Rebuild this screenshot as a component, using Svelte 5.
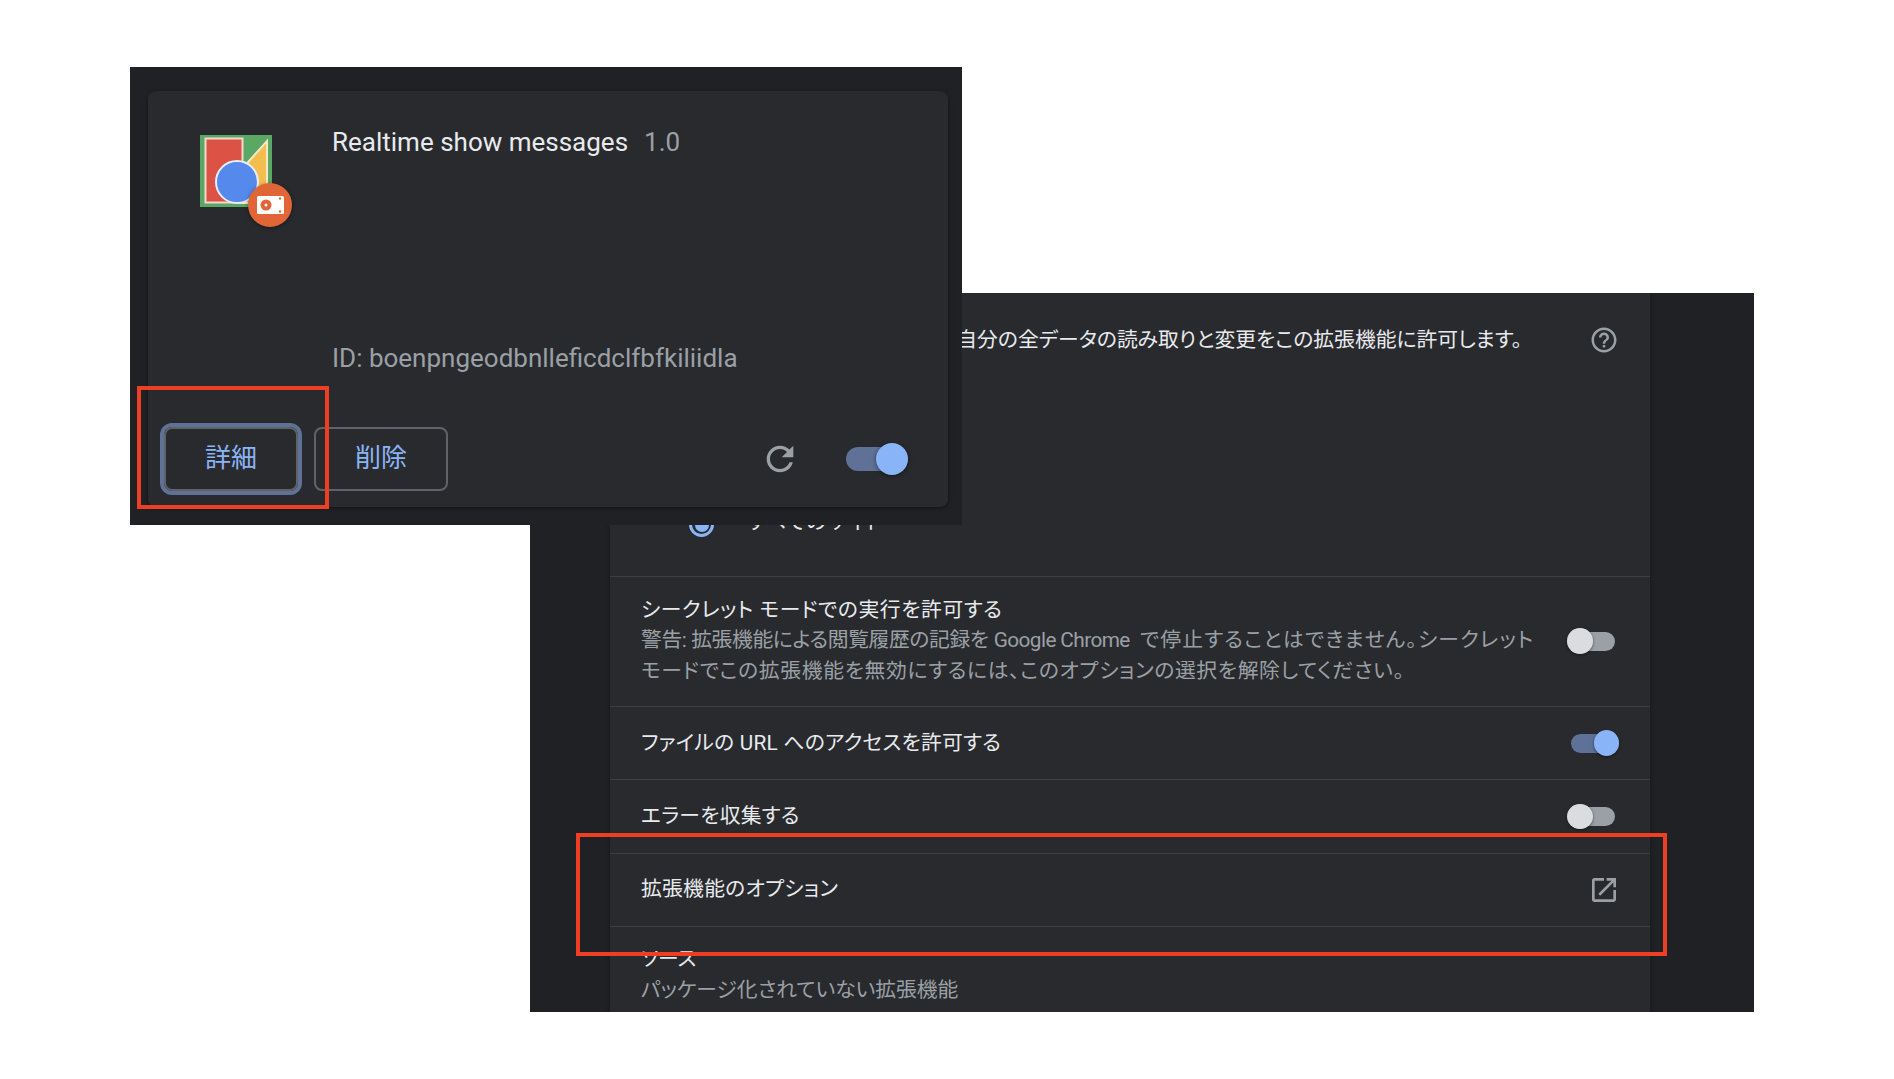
<script>
  const rows = [
    { label: 'ファイルの URL へのアクセスを許可する', on: true },
    { label: 'エラーを収集する', on: false }
  ];
</script>

<div class="page">
  <section class="window details">
    <div class="panel">
      <div class="row access">
        <span class="access-text">ウェブサイト上の自分の全データの読み取りと変更をこの拡張機能に許可します。</span>
        <svg class="help" viewBox="0 0 24 24"><path d="M11 18h2v-2h-2v2zm1-16C6.48 2 2 6.48 2 12s4.48 10 10 10 10-4.48 10-10S17.52 2 12 2zm0 18c-4.41 0-8-3.59-8-8s3.59-8 8-8 8 3.59 8 8-3.59 8-8 8zm0-14c-2.21 0-4 1.79-4 4h2c0-1.1.9-2 2-2s2 .9 2 2c0 2-3 1.75-3 5h2c0-2.25 3-2.5 3-5 0-2.21-1.79-4-4-4z"/></svg>
      </div>
      <div class="sites">
        <span class="radio"><span class="dot"></span></span>
        <span class="site-label">すべてのサイト</span>
      </div>
      <div class="row incognito">
        <div class="texts">
          <div class="title incognito-title">シークレット モードでの実行を許可する</div>
          <div class="sub"><span class="tight">警告: 拡張機能による閲覧履歴の記録を</span> <span class="brand">Google Chrome</span> <span class="loose">で停止することはできません。シークレット</span><br /><span class="line-two">モードでこの拡張機能を無効にするには、このオプションの選択を解除してください。</span></div>
        </div>
        <span class="small-toggle"><span class="small-knob"></span></span>
      </div>
      {#each rows as item}
        <div class="row simple">
          <span class="title spaced">{item.label}</span>
          <span class="small-toggle" class:on={item.on}><span class="small-knob"></span></span>
        </div>
      {/each}
      <div class="row simple">
        <span class="title spaced">拡張機能のオプション</span>
        <svg class="open" viewBox="0 0 24 24"><path d="M19 19H5V5h7V3H5a2 2 0 0 0-2 2v14a2 2 0 0 0 2 2h14c1.1 0 2-.9 2-2v-7h-2v7zM14 3v2h3.59l-9.83 9.83 1.41 1.41L19 6.41V10h2V3h-7z"/></svg>
      </div>
      <div class="row source">
        <div class="title">ソース</div>
        <div class="sub">パッケージ化されていない拡張機能</div>
      </div>
    </div>
  </section>

  <section class="window card-window">
    <div class="card">
      <div class="card-top">
        <div class="icon-wrap">
          <svg class="ext-icon" viewBox="0 0 72 72">
            <rect width="72" height="72" fill="#5aa864" />
            <rect x="5.5" y="3.5" width="37" height="64" fill="#dc5346" stroke="#efd9d0" stroke-width="2" />
            <path d="M67 6 L67 68 L40 68 L40 36 Z" fill="#f4bd50" stroke="#f3e9c8" stroke-width="2" />
            <circle cx="37" cy="47" r="21" fill="#5589ec" stroke="#e6edf8" stroke-width="2" />
          </svg>
          <svg class="badge" viewBox="0 0 44 44">
            <circle cx="22" cy="22" r="22" fill="#e06537" />
            <rect x="9" y="13" width="27" height="18" rx="1.5" fill="#fff" />
            <circle cx="18" cy="22" r="5.5" fill="#e06537" />
            <circle cx="18" cy="22" r="1.5" fill="#fff" />
            <circle cx="32" cy="15.5" r="1.2" fill="#e06537" />
            <circle cx="32" cy="28.5" r="1.2" fill="#e06537" />
          </svg>
        </div>
        <div class="info">
          <div class="name">Realtime show messages<span class="version">1.0</span></div>
          <div class="ext-id">ID: boenpngeodbnlleficdclfbfkiliidla</div>
        </div>
      </div>
      <div class="actions">
        <button class="btn focused">詳細</button>
        <button class="btn">削除</button>
        <span class="spacer"></span>
        <svg class="reload" viewBox="0 0 24 24"><path d="M17.65 6.35C16.2 4.9 14.21 4 12 4c-4.42 0-7.99 3.58-7.99 8s3.57 8 7.99 8c3.73 0 6.84-2.55 7.73-6h-2.08c-.82 2.33-3.04 4-5.65 4-3.31 0-6-2.69-6-6s2.69-6 6-6c1.66 0 3.14.69 4.22 1.78L13 11h7V4l-2.35 2.35z"/></svg>
        <span class="big-toggle"><span class="big-knob"></span></span>
      </div>
    </div>
  </section>

  <div class="mark mark-details"></div>
  <div class="mark mark-options"></div>
</div>

<style>
  :global(body) {
    margin: 0;
    background: #fff;
  }
  .page {
    position: relative;
    width: 1894px;
    height: 1079px;
    overflow: hidden;
    font-family: Roboto, "Noto Sans CJK JP", sans-serif;
    color: #e8eaed;
  }
  .window {
    position: absolute;
    box-sizing: border-box;
    background: #202124;
  }

  /* back window */
  .details {
    left: 530px;
    top: 293px;
    width: 1224px;
    height: 719px;
    padding-left: 80px;
    overflow: hidden;
  }
  .panel {
    width: 1040px;
    height: 100%;
    background: #292a2d;
    box-shadow: 0 0 4px rgba(0, 0, 0, 0.35);
    font-feature-settings: "palt";
    font-size: 20.8px;
    line-height: 31px;
  }
  .row {
    box-sizing: border-box;
    display: flex;
    align-items: center;
    justify-content: space-between;
    padding: 0 35px 0 31px;
    border-top: 1.6px solid rgba(255, 255, 255, 0.1);
  }
  .access {
    height: 92px;
    border-top: 0;
    padding-top: 2px;
    padding-right: 31px;
  }
  .access-text {
    margin-left: auto;
    margin-right: 67px;
    white-space: nowrap;
  }
  .help {
    width: 30px;
    height: 30px;
    fill: #9aa0a6;
  }
  .sites {
    height: 191px;
    box-sizing: border-box;
    display: flex;
    align-items: flex-end;
    padding: 0 0 38px 79px;
  }
  .radio {
    box-sizing: border-box;
    width: 25px;
    height: 25px;
    margin-bottom: 1px;
    border: 3px solid #8ab4f8;
    border-radius: 50%;
    display: flex;
    align-items: center;
    justify-content: center;
  }
  .dot {
    width: 14px;
    height: 14px;
    border-radius: 50%;
    background: #8ab4f8;
  }
  .site-label {
    margin-left: 33px;
    line-height: 31px;
    letter-spacing: 0.7px;
    color: #e8eaed;
  }
  .incognito {
    height: 130px;
    align-items: flex-start;
    padding-top: 18px;
  }
  .incognito .small-toggle {
    margin-top: 36.6px;
  }
  .incognito-title {
    line-height: 30px;
    letter-spacing: 0.6px;
  }
  .tight {
    letter-spacing: -0.4px;
  }
  .brand {
    letter-spacing: -0.6px;
  }
  .loose {
    margin-left: 5px;
    letter-spacing: 1.2px;
  }
  .line-two {
    letter-spacing: 0.65px;
  }
  .spaced {
    letter-spacing: 0.25px;
  }
  .simple {
    height: 73.4px;
  }
  .source {
    display: block;
    padding-top: 17px;
  }
  .sub {
    color: #9aa0a6;
    white-space: nowrap;
  }
  .small-toggle {
    position: relative;
    flex: none;
    width: 41.6px;
    height: 19.2px;
    border-radius: 10px;
    background: #9aa0a6;
  }
  .small-knob {
    position: absolute;
    top: -3.2px;
    left: -6.4px;
    width: 25.6px;
    height: 25.6px;
    border-radius: 50%;
    background: #dadce0;
    box-shadow: 0 1px 3px rgba(0, 0, 0, 0.5);
  }
  .small-toggle.on {
    margin-right: 2px;
    background: #5f7196;
  }
  .on .small-knob {
    left: auto;
    right: -6.4px;
    background: #8ab4f8;
  }
  .open {
    width: 32px;
    height: 32px;
    margin-right: -5px;
    fill: #9aa0a6;
  }

  /* front window */
  .card-window {
    left: 130px;
    top: 67px;
    width: 832px;
    height: 458px;
    padding: 24px 14px 18px 18px;
  }
  .card {
    box-sizing: border-box;
    height: 416px;
    display: flex;
    flex-direction: column;
    border-radius: 8px;
    background: #292a2d;
    box-shadow: 0 1px 4px rgba(0, 0, 0, 0.4);
  }
  .card-top {
    flex: 1;
    display: flex;
    padding: 44px 0 0 52px;
  }
  .icon-wrap {
    position: relative;
    flex: none;
    width: 72px;
    height: 72px;
    margin-right: 60px;
  }
  .ext-icon {
    display: block;
    width: 72px;
    height: 72px;
  }
  .badge {
    position: absolute;
    left: 48px;
    top: 48px;
    width: 44px;
    height: 44px;
    filter: drop-shadow(0 1px 2px rgba(0, 0, 0, 0.4));
  }
  .info {
    font-size: 26px;
    line-height: 34px;
  }
  .name {
    margin-top: -10px;
    white-space: nowrap;
  }
  .version {
    margin-left: 16px;
    color: #9aa0a6;
  }
  .ext-id {
    margin-top: 182px;
    color: #9aa0a6;
    white-space: nowrap;
  }
  .actions {
    display: flex;
    align-items: center;
    gap: 16px;
    padding: 0 48px 16px 16px;
  }
  .btn {
    box-sizing: border-box;
    width: 134px;
    height: 64px;
    padding: 0 0 7px;
    border: 2px solid #5f6368;
    border-radius: 8px;
    background: transparent;
    color: #8ab4f8;
    font-family: inherit;
    font-size: 26px;
  }
  .focused {
    box-shadow: 0 0 0 4px #5f7196;
  }
  .spacer {
    flex: 1;
  }
  .reload {
    width: 40px;
    height: 40px;
    margin-right: 30px;
    fill: #9aa0a6;
  }
  .big-toggle {
    position: relative;
    width: 54px;
    height: 24px;
    border-radius: 12px;
    background: #5f7196;
  }
  .big-knob {
    position: absolute;
    top: -4px;
    right: -8px;
    width: 32px;
    height: 32px;
    border-radius: 50%;
    background: #8ab4f8;
    box-shadow: 0 1px 4px rgba(0, 0, 0, 0.5);
  }

  /* annotation boxes */
  .mark {
    position: absolute;
    box-sizing: border-box;
    border: 4px solid #ee3e23;
  }
  .mark-details {
    left: 137px;
    top: 386px;
    width: 192px;
    height: 123px;
  }
  .mark-options {
    left: 576px;
    top: 833px;
    width: 1091px;
    height: 123px;
  }
</style>
